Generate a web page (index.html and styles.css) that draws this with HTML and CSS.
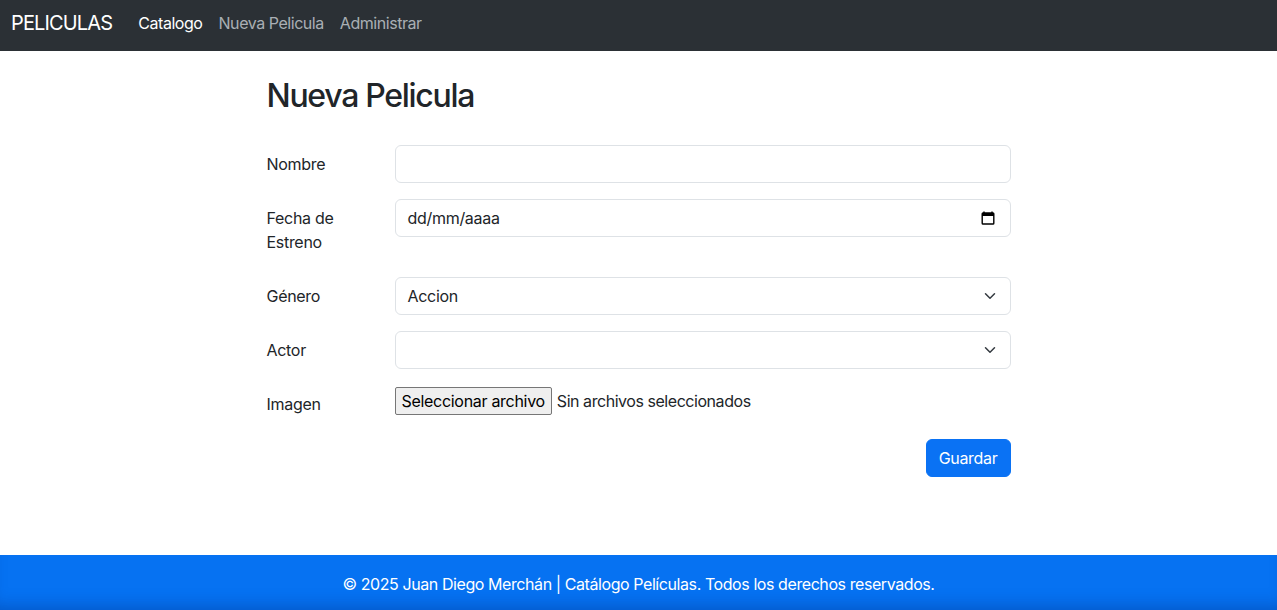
FILE: index.html
```html
<!DOCTYPE html>
<html lang="es">
<head>
<meta charset="utf-8">
<title>Nueva Pelicula</title>
<link rel="stylesheet" href="styles.css">
</head>
<body>
<nav class="navbar">
  <a class="brand" href="#">PELICULAS</a>
  <ul class="nav">
    <li><a class="nav-link active" href="#">Catalogo</a></li>
    <li><a class="nav-link" href="#">Nueva Pelicula</a></li>
    <li><a class="nav-link" href="#">Administrar</a></li>
  </ul>
</nav>
<main class="container">
  <h2 class="title">Nueva Pelicula</h2>
  <form class="form">
    <div class="form-row">
      <label class="form-label">Nombre</label>
      <div class="field"><input class="control" type="text"></div>
    </div>
    <div class="form-row">
      <label class="form-label">Fecha de Estreno</label>
      <div class="field">
        <div class="control control-date">
          <span>dd/mm/aaaa</span>
          <svg class="cal" width="14" height="14" viewBox="0 0 14 14"><path d="M3 0.5v2M11 0.5v2" stroke="#000" stroke-width="1.4" fill="none"/><rect x="1.2" y="2" width="11.6" height="11" rx="0.8" fill="none" stroke="#000" stroke-width="1.4"/><rect x="1" y="2" width="12" height="3" fill="#000"/></svg>
        </div>
      </div>
    </div>
    <div class="form-row">
      <label class="form-label">Género</label>
      <div class="field">
        <div class="control control-select">
          <span>Accion</span>
          <svg class="chev" width="12" height="12" viewBox="0 0 16 16"><path d="M2 5l6 6 6-6" fill="none" stroke="#343a40" stroke-width="2" stroke-linecap="round" stroke-linejoin="round"/></svg>
        </div>
      </div>
    </div>
    <div class="form-row">
      <label class="form-label">Actor</label>
      <div class="field">
        <div class="control control-select">
          <span></span>
          <svg class="chev" width="12" height="12" viewBox="0 0 16 16"><path d="M2 5l6 6 6-6" fill="none" stroke="#343a40" stroke-width="2" stroke-linecap="round" stroke-linejoin="round"/></svg>
        </div>
      </div>
    </div>
    <div class="form-row">
      <label class="form-label">Imagen</label>
      <div class="field file-field">
        <span class="file-btn">Seleccionar archivo</span>
        <span class="file-text">Sin archivos seleccionados</span>
      </div>
    </div>
    <div class="actions">
      <button class="btn-primary" type="button">Guardar</button>
    </div>
  </form>
</main>
<footer class="footer">
  © 2025 Juan Diego Merchán | Catálogo Películas. Todos los derechos reservados.
</footer>
</body>
</html>
```
FILE: styles.css
```css
* { box-sizing: border-box; }
html, body { margin: 0; padding: 0; }
body {
  font-family: Inter, "Liberation Sans", sans-serif;
  font-size: 16px;
  line-height: 24px;
  color: #212529;
  background: #fff;
  height: 610px;
  display: flex;
  flex-direction: column;
}
.navbar {
  height: 51px;
  background: #2b3035;
  display: flex;
  align-items: center;
  padding: 0 11px 5px;
}
.brand {
  color: #fff;
  font-size: 20px;
  text-decoration: none;
  margin-right: 18px;
  letter-spacing: -0.85px;
}
.nav { list-style: none; margin: 0; padding: 0; display: flex; }
.nav-link {
  display: block;
  padding: 0 8px;
  color: rgba(222, 226, 230, 0.72);
  text-decoration: none;
  letter-spacing: -0.45px;
}
.nav-link.active { color: #fff; }
.container {
  width: 744px;
  margin: 0 auto;
  flex: 1;
}
.title {
  margin: 26px 0 30px;
  font-size: 32px;
  line-height: 38px;
  font-weight: 500;
  letter-spacing: -1.3px;
}
.form-row { display: flex; margin-bottom: 16px; }
.form-label {
  width: 128px;
  padding: 7px 24px 7px 0;
  flex: none;
  letter-spacing: -0.3px;
}
.field { flex: 1; }
.control {
  display: block;
  width: 100%;
  height: 38px;
  padding: 6px 12px;
  font: inherit;
  color: #212529;
  border: 1px solid #dee2e6;
  border-radius: 6px;
  background: #fff;
  outline: none;
}
.control-date, .control-select {
  display: flex;
  align-items: center;
  justify-content: space-between;
  letter-spacing: -0.3px;
}
.cal { margin-right: 3px; }
.chev { margin-right: 2px; }
.file-field { display: flex; align-items: center; padding-top: 2px; align-self: flex-start; }
.file-btn {
  display: inline-block;
  height: 28px;
  padding: 1px 6px;
  border: 1px solid #767676;
  border-radius: 2px;
  background: #efefef;
  color: #000;
  line-height: 24px;
  letter-spacing: -0.3px;
}
.file-text { margin-left: 5px; letter-spacing: -0.45px; color: #212529; }
.actions { display: flex; justify-content: flex-end; margin-top: 9px; }
.btn-primary {
  height: 38px;
  padding: 6px 12px;
  font: inherit;
  color: #fff;
  background: #0a72f4;
  border: 1px solid #0a72f4;
  border-radius: 6px;
  letter-spacing: -0.3px;
}
.footer {
  height: 55px;
  background: #0672f2;
  color: #fff;
  text-align: center;
  line-height: 55px;
  padding-top: 2px;
  letter-spacing: -0.42px;
  box-shadow: inset 0 -14px 16px -10px rgba(0, 40, 120, 0.35);
}
```
